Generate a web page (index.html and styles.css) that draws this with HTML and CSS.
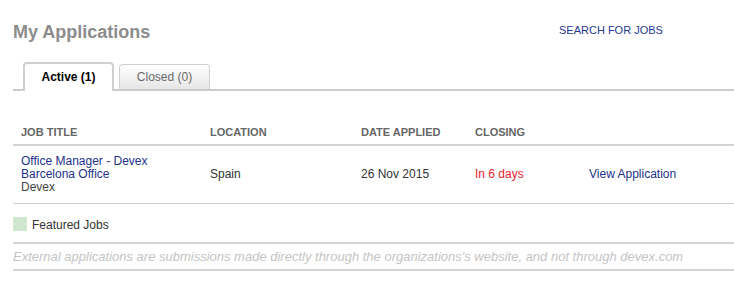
FILE: index.html
```html
<!DOCTYPE html>
<html>
<head>
<meta charset="utf-8">
<link rel="stylesheet" href="styles.css">
</head>
<body>
<div class="page">
  <div class="header">
    <h1 class="title">My Applications</h1>
    <a class="search" href="#">SEARCH FOR JOBS</a>
  </div>
  <div class="tabs">
    <div class="tab active">Active (1)</div>
    <div class="tab">Closed (0)</div>
  </div>
  <table class="apps">
    <thead>
      <tr>
        <th class="c1">JOB TITLE</th>
        <th class="c2">LOCATION</th>
        <th class="c3">DATE APPLIED</th>
        <th class="c4">CLOSING</th>
        <th class="c5"></th>
      </tr>
    </thead>
    <tbody>
      <tr>
        <td class="c1"><a href="#" class="job">Office Manager - Devex<br>Barcelona Office</a><br><span class="org">Devex</span></td>
        <td class="c2">Spain</td>
        <td class="c3">26 Nov 2015</td>
        <td class="c4 red">In 6 days</td>
        <td class="c5"><a href="#" class="view">View Application</a></td>
      </tr>
    </tbody>
  </table>
  <div class="legend"><span class="swatch"></span>Featured Jobs</div>
  <p class="note">External applications are submissions made directly through the organizations's website, and not through devex.com</p>
</div>
</body>
</html>
```
FILE: styles.css
```css
* { box-sizing: border-box; }
body {
  margin: 0;
  font-family: "Liberation Sans", Arial, sans-serif;
  background: #fff;
}
.page {
  padding: 0 0 0 13px;
}
.header {
  display: flex;
  align-items: flex-start;
  height: 63px;
}
.title {
  margin: 22px 0 0 0;
  font-size: 18px;
  font-weight: bold;
  color: #8c8c8c;
  width: 546px;
}
.search {
  margin-top: 24px;
  font-size: 11px;
  color: #1f3a8f;
  text-decoration: none;
}
.tabs {
  display: flex;
  align-items: flex-end;
  gap: 5px;
  padding-left: 10px;
  border-bottom: 2px solid #cccccc;
  height: 28px;
}
.tab {
  width: 91px;
  height: 25px;
  border: 1px solid #d0d0d0;
  border-bottom: none;
  border-radius: 4px 4px 0 0;
  background: linear-gradient(#ffffff, #e6e6e6);
  color: #6a6a6a;
  font-size: 12px;
  text-align: center;
  line-height: 24px;
}
.tab.active {
  height: 29px;
  margin-bottom: -2px;
  background: #fff;
  border: 2px solid #cfcfcf;
  border-bottom: none;
  color: #000;
  font-weight: bold;
  line-height: 27px;
}
.apps {
  width: 100%;
  border-collapse: collapse;
  margin-top: 33px;
  font-size: 12px;
}
.apps th {
  text-align: left;
  font-size: 11px;
  color: #666;
  font-weight: bold;
  padding: 0 0 6px 0;
  border-bottom: 2px solid #d4d4d4;
  height: 21px;
  vertical-align: bottom;
}
.apps td {
  color: #333;
  padding: 9px 0 9px 0;
  line-height: 13px;
  vertical-align: middle;
  border-bottom: 1px solid #cccccc;
}
.c1 { width: 197px; padding-left: 8px !important; }
.c2 { width: 151px; }
.c3 { width: 114px; }
.c4 { width: 114px; }
.job { color: #22318a; text-decoration: none; }
.org { color: #444; }
.red { color: #ec1c2e !important; }
.view { color: #22318a; text-decoration: none; }
.legend {
  display: flex;
  align-items: center;
  height: 40px;
  padding-top: 3px;
  font-size: 12px;
  color: #333;
  border-bottom: 2px solid #d4d4d4;
}
.swatch {
  width: 14px;
  height: 14px;
  background: #cfe6cf;
  margin-right: 5px;
  margin-top: -2px;
}
.note {
  margin: 0;
  height: 27px;
  line-height: 26px;
  font-size: 13px;
  font-style: italic;
  color: #c4c4c4;
  border-bottom: 2px solid #d4d4d4;
  white-space: nowrap;
}
```
